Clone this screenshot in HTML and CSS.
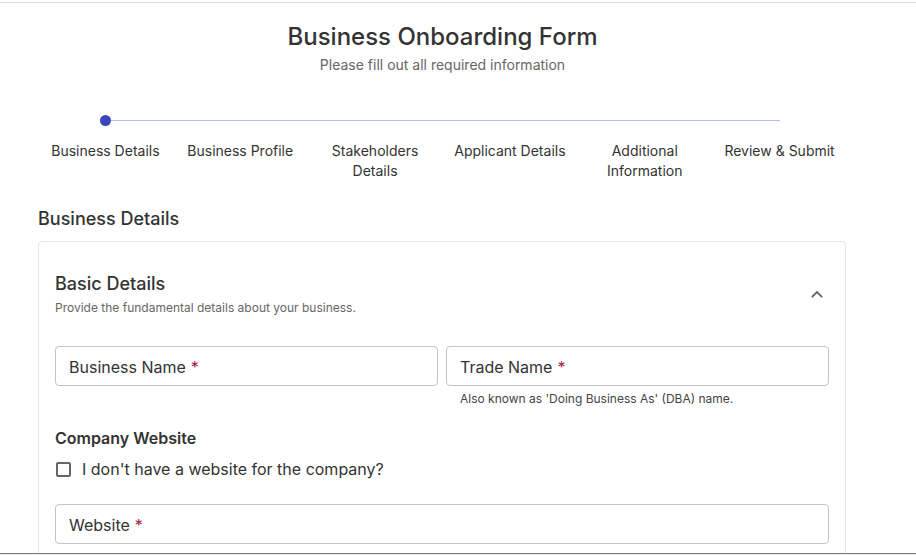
FILE: index.html
```html
<!DOCTYPE html>
<html lang="en">
<head>
<meta charset="utf-8">
<title>Business Onboarding Form</title>
<link rel="stylesheet" href="styles.css">
</head>
<body>
<div class="frame">
  <div class="viewport">
    <main class="page">
      <header class="page-head">
        <h1 class="title">Business Onboarding Form</h1>
        <p class="subtitle">Please fill out all required information</p>
      </header>

      <ol class="stepper">
        <li class="step step-first">
          <div class="track"><span class="half"></span><span class="dot"></span><span class="half on"></span></div>
          <span class="step-label">Business Details</span>
        </li>
        <li class="step">
          <div class="track"><span class="half on"></span><span class="nodot"></span><span class="half on"></span></div>
          <span class="step-label">Business Profile</span>
        </li>
        <li class="step">
          <div class="track"><span class="half on"></span><span class="nodot"></span><span class="half on"></span></div>
          <span class="step-label">Stakeholders Details</span>
        </li>
        <li class="step">
          <div class="track"><span class="half on"></span><span class="nodot"></span><span class="half on"></span></div>
          <span class="step-label">Applicant Details</span>
        </li>
        <li class="step">
          <div class="track"><span class="half on"></span><span class="nodot"></span><span class="half on"></span></div>
          <span class="step-label">Additional Information</span>
        </li>
        <li class="step">
          <div class="track"><span class="half on"></span><span class="nodot"></span><span class="half"></span></div>
          <span class="step-label">Review &amp; Submit</span>
        </li>
      </ol>

      <h2 class="section-title">Business Details</h2>

      <section class="card">
        <div class="card-head">
          <div>
            <h3 class="card-title">Basic Details</h3>
            <p class="card-desc">Provide the fundamental details about your business.</p>
          </div>
          <svg class="chevron" width="14" height="14" viewBox="0 0 14 14" aria-hidden="true">
            <path d="M2.5 9.5 L7 5 L11.5 9.5" fill="none" stroke="#666" stroke-width="1.8" stroke-linecap="square"/>
          </svg>
        </div>

        <div class="row">
          <div class="field">
            <div class="input"><span>Business Name</span><span class="req">*</span></div>
          </div>
          <div class="field">
            <div class="input"><span>Trade Name</span><span class="req">*</span></div>
            <p class="helper">Also known as 'Doing Business As' (DBA) name.</p>
          </div>
        </div>

        <h4 class="group-title">Company Website</h4>
        <label class="check">
          <span class="box"></span>
          <span>I don't have a website for the company?</span>
        </label>

        <div class="field website">
          <div class="input"><span>Website</span><span class="req">*</span></div>
        </div>
      </section>
    </main>
  </div>
</div>
</body>
</html>
```

FILE: styles.css
```css
* { box-sizing: border-box; }

html, body {
  margin: 0;
  padding: 0;
  background: #fff;
}

body {
  font-family: Inter, "Noto Sans", "Liberation Sans", sans-serif;
  color: #333;
}

.frame {
  height: 555px;
  padding-top: 2px;
  border-bottom: 1px solid #ececec;
  overflow: hidden;
}

.viewport {
  height: 100%;
  border-top: 1px solid #dcdcdc;
  border-bottom: 1px solid #7a7a7a;
  overflow: hidden;
}

.page {
  width: 809px;
  margin-left: 38px;
}

.page-head {
  text-align: center;
  padding-top: 18px;
}

.title {
  margin: 0;
  font-size: 24px;
  line-height: 32px;
  font-weight: 500;
  color: #333;
}

.subtitle {
  margin: 2px 0 0;
  font-size: 14px;
  line-height: 20px;
  color: #666;
}

.stepper {
  list-style: none;
  margin: 39px 0 0;
  padding: 0;
  display: grid;
  grid-template-columns: repeat(6, 1fr);
}

.step {
  display: flex;
  flex-direction: column;
  align-items: center;
}

.track {
  width: 100%;
  height: 12px;
  display: flex;
  align-items: center;
}

.half {
  flex: 1;
  height: 1px;
}

.half.on {
  background: #b3bdf6;
}

.dot {
  width: 11px;
  height: 11px;
  border-radius: 50%;
  background: #3a47b9;
  flex: none;
}

.nodot {
  width: 0;
  flex: none;
}

.step-label {
  margin-top: 15px;
  font-size: 14px;
  line-height: 20px;
  text-align: center;
  color: #333;
  padding: 0 10px;
}

.section-title {
  margin: 25px 0 0;
  font-size: 18px;
  line-height: 26px;
  font-weight: 500;
  color: #333;
}

.card {
  margin-top: 9px;
  width: 808px;
  border: 1px solid #e6e6e6;
  border-radius: 4px;
  padding: 29px 16px 40px;
}

.card-head {
  display: flex;
  align-items: center;
  justify-content: space-between;
}

.card-title {
  margin: 0;
  font-size: 18px;
  line-height: 26px;
  font-weight: 500;
  color: #333;
}

.card-desc {
  margin: 2px 0 0;
  font-size: 12px;
  line-height: 18px;
  color: #666;
}

.chevron {
  margin-right: 5px;
}

.row {
  margin-top: 29px;
  display: grid;
  grid-template-columns: 1fr 1fr;
  gap: 8px;
}

.input {
  height: 40px;
  border: 1px solid #c4c4c4;
  border-radius: 4px;
  padding: 1px 13px 0;
  display: flex;
  align-items: center;
  gap: 5px;
  font-size: 16px;
  color: #333;
}

.req {
  color: #a6213e;
}

.helper {
  margin: 5px 0 0;
  padding-left: 14px;
  font-size: 12px;
  line-height: 16px;
  color: #444;
}

.group-title {
  margin: 19px 0 0;
  font-size: 16px;
  line-height: 24px;
  font-weight: 600;
  color: #333;
}

.check {
  margin-top: 7px;
  display: flex;
  align-items: center;
  gap: 11px;
  font-size: 16px;
  line-height: 24px;
  color: #333;
}

.box {
  width: 15px;
  height: 15px;
  border: 2px solid #666;
  border-radius: 2px;
  margin-left: 1px;
}

.website {
  margin-top: 23px;
}
```
